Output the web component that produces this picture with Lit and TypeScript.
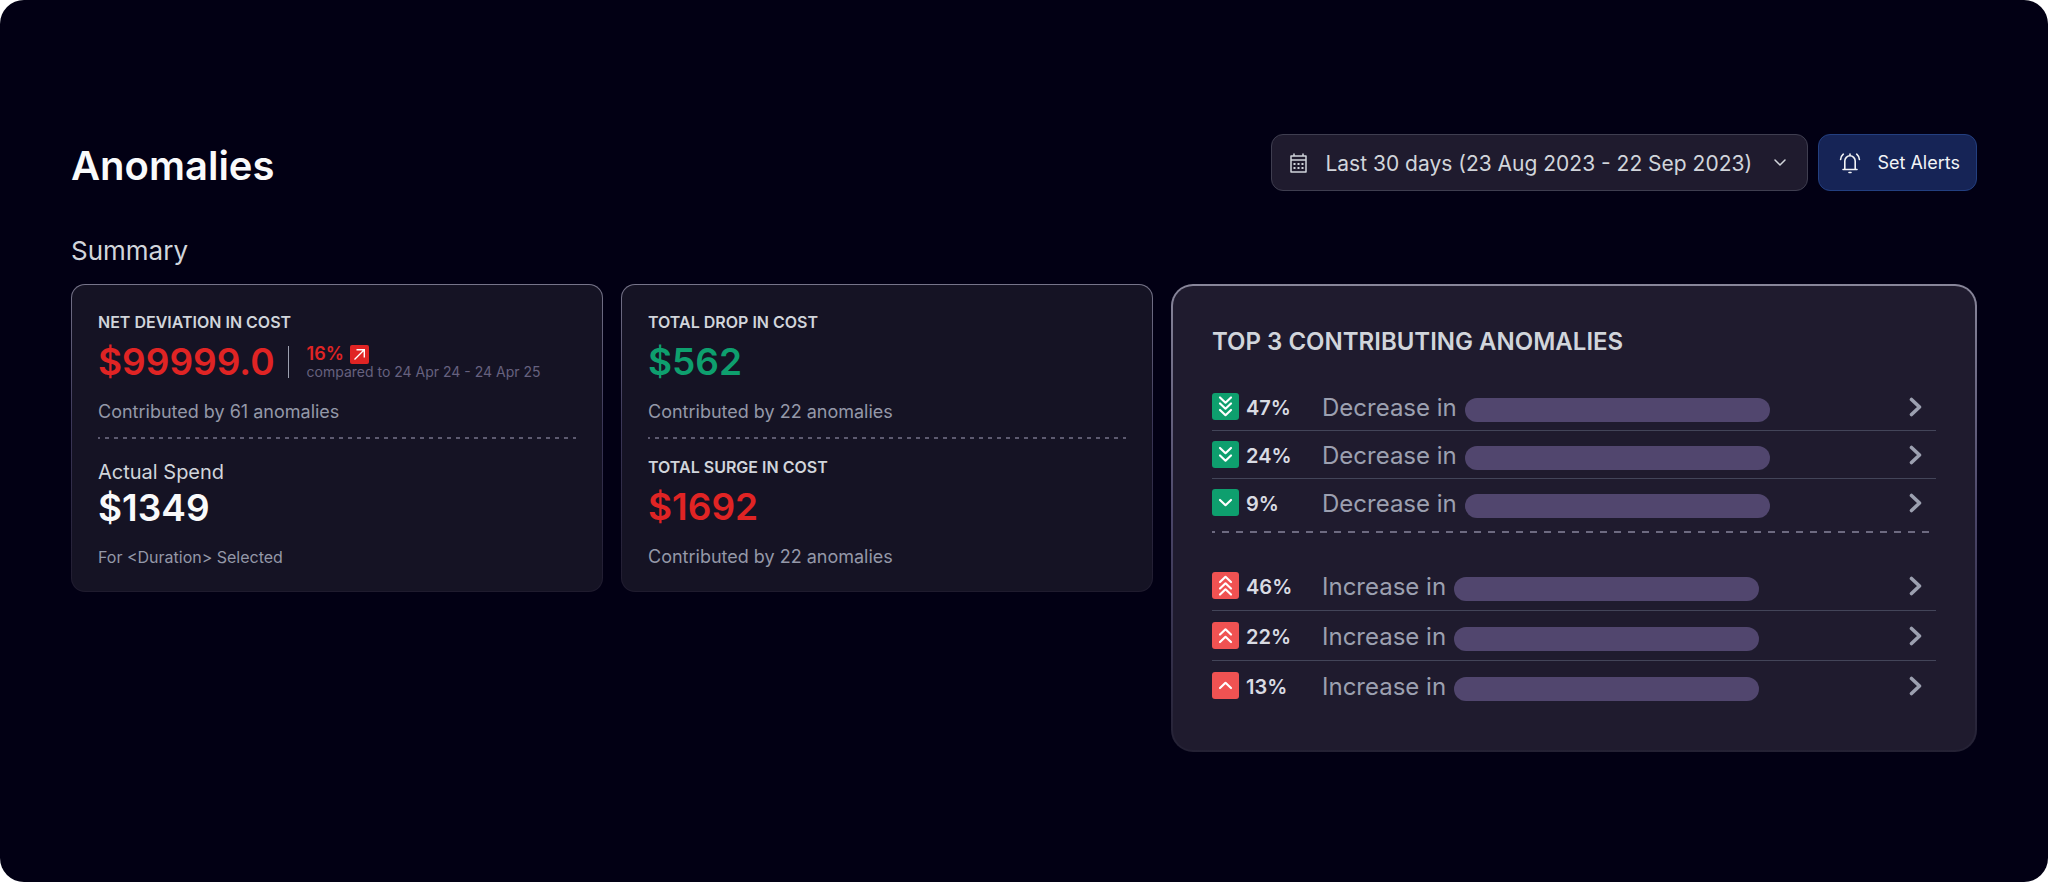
import { LitElement, html, css, svg } from "lit";
import { customElement, property } from "lit/decorators.js";

type Direction = "down" | "up";

interface Anomaly {
  percent: number;
  level: number;
}

const decreases: Anomaly[] = [
  { percent: 47, level: 3 },
  { percent: 24, level: 2 },
  { percent: 9, level: 1 },
];

const increases: Anomaly[] = [
  { percent: 46, level: 3 },
  { percent: 22, level: 2 },
  { percent: 13, level: 1 },
];

/* Top edge of every chevron in the 27px badge, by severity level. */
const chevronTops: Record<number, number[]> = {
  1: [10.5],
  2: [6.5, 14],
  3: [4, 10, 16.5],
};

@customElement("severity-badge")
export class SeverityBadge extends LitElement {
  @property() direction: Direction = "down";
  @property({ type: Number }) level = 1;

  static styles = css`
    :host {
      display: block;
      flex: none;
    }
    svg {
      display: block;
    }
    .down {
      fill: #0e9f6e;
    }
    .up {
      fill: #f05252;
    }
    .mark {
      fill: none;
      stroke: #ffffff;
      stroke-width: 2.2;
      stroke-linecap: round;
      stroke-linejoin: round;
    }
  `;

  render() {
    const flip = this.direction === "up" ? "rotate(180 13.5 13.5)" : "";
    return html`
      <svg width="27" height="27" viewBox="0 0 27 27" aria-hidden="true">
        <rect class=${this.direction} width="27" height="27" rx="3" />
        <g transform=${flip}>
          ${chevronTops[this.level].map(
            (y) => svg`<path class="mark" d="M8 ${y + 0.5}l5.500 5.200 5.500-5.200" />`
          )}
        </g>
      </svg>
    `;
  }
}

@customElement("anomaly-list")
export class AnomalyList extends LitElement {
  @property() direction: Direction = "down";
  @property({ attribute: false }) items: Anomaly[] = [];

  static styles = css`
    :host {
      display: block;
    }
    .list {
      list-style: none;
      margin: 0;
      padding: 0;
    }
    .item + .item {
      border-top: 1px solid #434559;
    }
    .link {
      display: flex;
      align-items: center;
      padding: 10px 14px 10px 0;
      color: inherit;
      text-decoration: none;
    }
    .up .link {
      padding-top: 11px;
      padding-bottom: 11px;
    }
    .percent {
      flex: none;
      width: 76px;
      margin-left: 7px;
      padding-top: 3px;
      font-size: 20px;
      line-height: 24px;
      font-weight: 600;
      color: #d9dbe3;
    }
    .text {
      flex: none;
      padding-top: 2px;
      font-size: 24px;
      line-height: 25px;
      color: #9ca0b0;
    }
    .pill {
      width: 43%;
      height: 24px;
      margin: 2px 0 -4px 8px;
      border-radius: 12px;
      background: #51466e;
    }
    .chevron {
      flex: none;
      margin-left: auto;
      fill: none;
      stroke: #9ca0b0;
      stroke-width: 3.6;
      stroke-linecap: round;
      stroke-linejoin: round;
    }
  `;

  render() {
    const word = this.direction === "down" ? "Decrease in" : "Increase in";
    return html`
      <ul class="list ${this.direction}">
        ${this.items.map(
          (item) => html`
            <li class="item">
              <a class="link" href="#">
                <severity-badge
                  direction=${this.direction}
                  level=${item.level}
                ></severity-badge>
                <span class="percent">${item.percent}%</span>
                <span class="text">${word}</span>
                <span class="pill"></span>
                <svg class="chevron" width="13" height="20" viewBox="0 0 13 20" aria-hidden="true">
                  <path d="M2.500 2.500l8 7.500-8 7.500" />
                </svg>
              </a>
            </li>
          `
        )}
      </ul>
    `;
  }
}

@customElement("app-root")
export class AppRoot extends LitElement {
  static styles = css`
    :host {
      display: block;
      background: #ffffff;
      font-family: Inter, "Liberation Sans", sans-serif;
      color: #d1d5db;
    }
    .page {
      box-sizing: border-box;
      min-height: 100vh;
      padding: 134px 71px 64px;
      border-radius: 24px;
      background: #020014;
    }
    .header {
      display: flex;
      align-items: center;
      gap: 10px;
    }
    .title {
      flex: 1;
      margin: 0;
      padding-top: 6px;
      font-size: 40px;
      line-height: 48px;
      font-weight: 600;
      color: #f9fafb;
    }
    .range {
      box-sizing: border-box;
      display: flex;
      align-items: center;
      height: 57px;
      padding: 0 20px 0 17px;
      border: 1px solid #3f3e50;
      border-radius: 12px;
      background: #1f1b2e;
    }
    .select {
      appearance: none;
      margin: 3px 21px 0 17px;
      padding: 0;
      border: 0;
      background: transparent;
      font: inherit;
      font-size: 21px;
      line-height: 28px;
      color: #d1d5db;
    }
    .icon {
      flex: none;
      fill: none;
      stroke: #d1d5db;
      stroke-linecap: round;
      stroke-linejoin: round;
    }
    .dots {
      fill: #d1d5db;
      stroke: none;
    }
    .alerts {
      display: flex;
      align-items: center;
      gap: 16px;
      height: 57px;
      padding: 0 16px 0 20px;
      border: 1px solid #233f80;
      border-radius: 12px;
      background: #162456;
      font: inherit;
      font-size: 18px;
      line-height: 24px;
      color: #f3f4f6;
    }
    .alerts .icon {
      stroke: #f3f4f6;
    }
    .section {
      margin: 44px 0 17px;
      font-size: 26px;
      line-height: 32px;
      font-weight: 400;
      color: #d1d5db;
    }
    .cards {
      display: grid;
      grid-template-columns: 266fr 266fr 403fr;
      align-items: start;
      gap: 18px;
    }
    .card {
      box-sizing: border-box;
      min-height: 308px;
      padding: 27px 26px 21px;
      border: 1px solid transparent;
      border-radius: 14px;
      background:
        linear-gradient(#151324, #151324) padding-box,
        linear-gradient(#77758a, #3b3758 45%, #1f1b2e) border-box;
    }
    .card.top {
      padding: 40px 39px;
      border-width: 2px;
      border-radius: 22px;
      background:
        linear-gradient(#1f1b2e, #1f1b2e) padding-box,
        linear-gradient(#88869a, #4a4568 50%, #242134) border-box;
    }
    .label {
      margin: 0;
      font-size: 16px;
      line-height: 20px;
      font-weight: 600;
      color: #d1d5db;
    }
    .sublabel {
      margin: 0;
      padding-top: 3px;
      font-size: 20px;
      line-height: 24px;
      font-weight: 400;
      color: #d1d5db;
    }
    .figure {
      display: flex;
      align-items: center;
      margin: 10px 0 18px;
    }
    .sublabel + .figure {
      margin-top: 4px;
    }
    .amount {
      font-size: 37px;
      line-height: 40px;
      font-weight: 600;
      color: #f9fafb;
    }
    .red {
      color: #e02424;
    }
    .green {
      color: #0e9f6e;
    }
    .change {
      margin-left: 13px;
      padding-left: 19px;
      background: linear-gradient(#9ca0b0, #9ca0b0) left center / 1px 32px no-repeat;
    }
    .rate {
      display: flex;
      align-items: center;
      gap: 6px;
      font-size: 18px;
      line-height: 20px;
      font-weight: 600;
    }
    .compare {
      font-size: 14px;
      line-height: 16px;
      color: #66617f;
    }
    .note {
      margin: 0;
      font-size: 18px;
      line-height: 24px;
      color: #9498a8;
    }
    .note.small {
      font-size: 16px;
      line-height: 22px;
    }
    .rule {
      height: 2px;
      margin: 13px 0 18px;
      border: 0;
      background: repeating-linear-gradient(90deg, #5d5a70 0 2px, transparent 2px 7px, #5d5a70 7px 9px);
    }
    .top .rule {
      margin: 5px 0 28px;
      background: repeating-linear-gradient(90deg, #6d6a80 0 3px, transparent 3px 10px, #6d6a80 10px 14px);
    }
    .heading {
      margin: 0 0 25px;
      font-size: 24px;
      line-height: 32px;
      font-weight: 600;
      color: #d1d5db;
    }
  `;

  render() {
    return html`
      <main class="page">
        <header class="header">
          <h1 class="title">Anomalies</h1>
          <label class="range">
            <svg class="icon" width="19" height="20" viewBox="0 0 19 20" stroke-width="1.5" role="img" aria-label="Date range">
              <path d="M2 3h15v16H2zM2 7h15M5 1v2M14 1v2" />
              <path class="dots" d="M4.500 10h2v2h-2zM8.500 10h2v2h-2zM12.500 10h2v2h-2zM4.500 14h2v2h-2zM8.500 14h2v2h-2zM12.500 14h2v2h-2z" />
            </svg>
            <select class="select">
              <option>Last 30 days (23 Aug 2023 - 22 Sep 2023)</option>
            </select>
            <svg class="icon" width="14" height="8" viewBox="0 0 14 8" stroke-width="1.5" aria-hidden="true">
              <path d="M2 1l5 5 5-5" />
            </svg>
          </label>
          <button class="alerts" type="button">
            <svg class="icon" width="22" height="22" viewBox="0 0 22 22" stroke-width="1.6" aria-hidden="true">
              <path d="M4 17.500h14M5.800 17.500V9a5.200 5.200 0 0 1 10.400 0v8.500M11 3.500V2M10 20.500h2M4.300 2.200C2.700 3.500 1.800 5.200 1.600 7.500M17.700 2.200c1.600 1.300 2.500 3 2.700 5.300" />
            </svg>
            Set Alerts
          </button>
        </header>

        <h2 class="section">Summary</h2>

        <div class="cards">
          <section class="card">
            <h3 class="label">NET DEVIATION IN COST</h3>
            <div class="figure">
              <span class="amount red">$99999.0</span>
              <div class="change">
                <div class="rate red">
                  16%
                  <svg width="19" height="19" viewBox="0 0 19 19" aria-hidden="true">
                    <rect width="19" height="19" rx="2" fill="#e02424" />
                    <path d="M4.500 14.500L14 5M6.500 4.700H14.300V12.500" fill="none" stroke="#ffffff" stroke-width="1.400" />
                  </svg>
                </div>
                <div class="compare">compared to 24 Apr 24 - 24 Apr 25</div>
              </div>
            </div>
            <p class="note">Contributed by 61 anomalies</p>
            <hr class="rule" />
            <h3 class="sublabel">Actual Spend</h3>
            <div class="figure"><span class="amount">$1349</span></div>
            <p class="note small">For &lt;Duration&gt; Selected</p>
          </section>

          <section class="card">
            <h3 class="label">TOTAL DROP IN COST</h3>
            <div class="figure"><span class="amount green">$562</span></div>
            <p class="note">Contributed by 22 anomalies</p>
            <hr class="rule" />
            <h3 class="label">TOTAL SURGE IN COST</h3>
            <div class="figure"><span class="amount red">$1692</span></div>
            <p class="note">Contributed by 22 anomalies</p>
          </section>

          <section class="card top">
            <h3 class="heading">TOP 3 CONTRIBUTING ANOMALIES</h3>
            <anomaly-list direction="down" .items=${decreases}></anomaly-list>
            <hr class="rule" />
            <anomaly-list direction="up" .items=${increases}></anomaly-list>
          </section>
        </div>
      </main>
    `;
  }
}
